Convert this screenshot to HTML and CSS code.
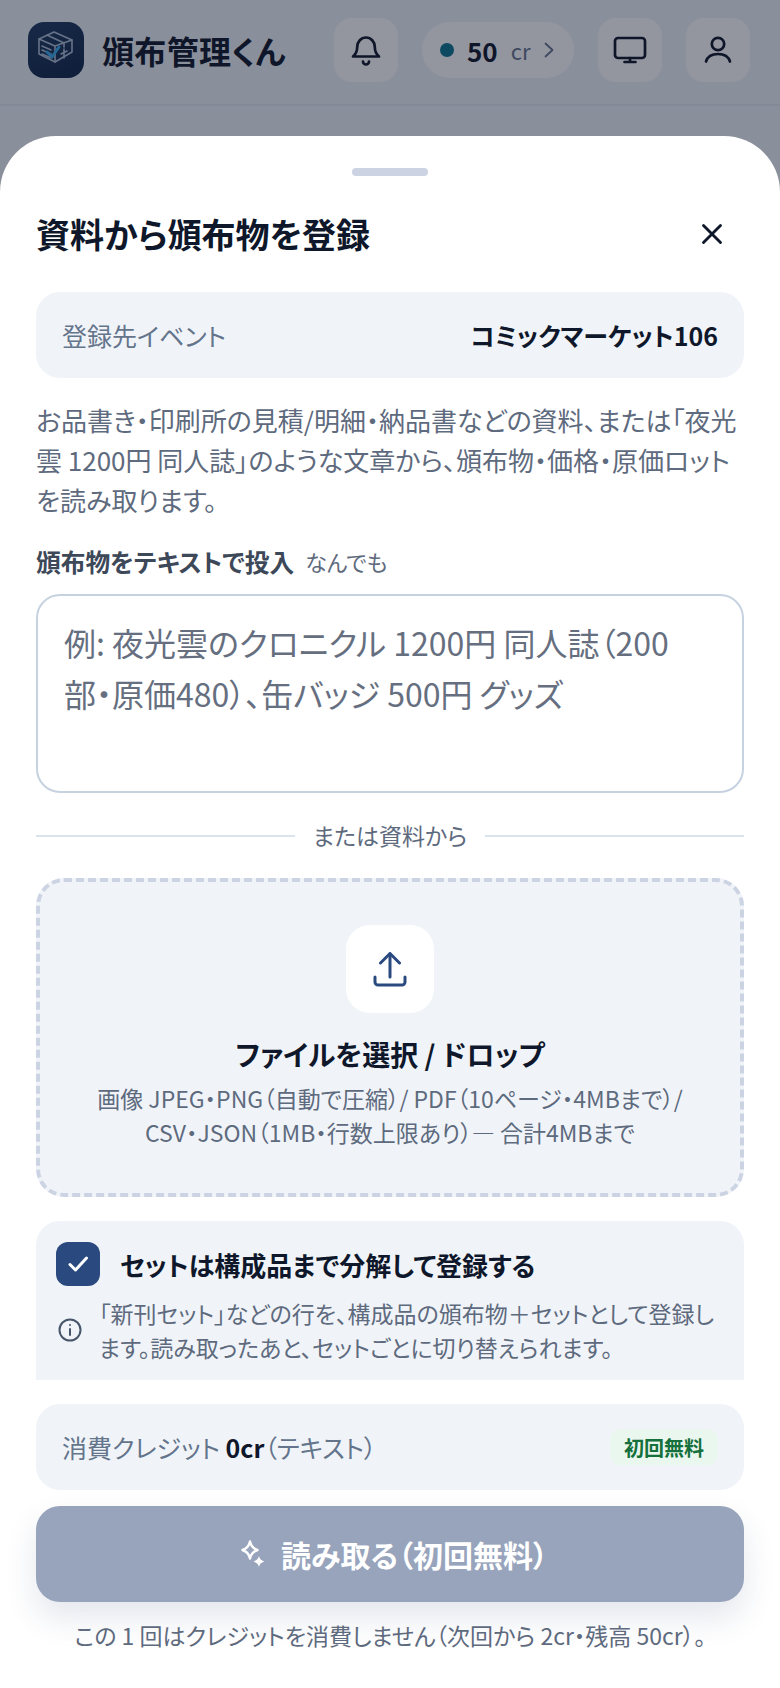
FILE: index.html
```html
<!DOCTYPE html>
<html lang="ja">
<head>
<meta charset="utf-8">
<title>頒布管理くん</title>
<link rel="stylesheet" href="styles.css">
</head>
<body>
<div class="page">
  <header class="topbar">
    <div class="brand">
      <div class="logo">
        <svg viewBox="0 0 56 56" width="56" height="56" fill="none" stroke="#aebfd6" stroke-width="1.6" stroke-linejoin="round" stroke-linecap="round">
          <path d="M11 17 L26 10 L44 18 L44 30 L27 40 L11 32 Z"/>
          <path d="M11 17 L27 24 L44 18 M27 24 V40"/>
          <path d="M14 24 L23 28 M14 28 L23 32 M14 32 L23 36"/>
          <path d="M19 13 L36 21 V25"/>
          <path d="M33 32 L39 29 M36 27 V36"/>
          <path d="M19 30 L24 35 L31 25" stroke="#38a9ec" stroke-width="3"/>
        </svg>
      </div>
      <span class="brand-name">頒布管理くん</span>
    </div>
    <div class="actions">
      <button class="icon-btn">
        <svg viewBox="0 0 36 36" width="36" height="36" class="ico"><path d="M5 24.500c2.800-2.400 4.200-5 4.200-9.500a8.800 9.500 0 0 1 17.600 0c0 4.500 1.400 7.100 4.200 9.500Z"/><path d="M15 29.500a3 3 0 0 0 6 0"/></svg>
      </button>
      <button class="credit">
        <span class="dot"></span><span class="credit-num">50</span><span class="credit-unit">cr</span>
        <svg viewBox="0 0 10 16" width="10" height="16" class="ico thin"><path d="M1.500 1.500 8.500 8l-7 6.500"/></svg>
      </button>
      <button class="icon-btn">
        <svg viewBox="0 0 36 36" width="36" height="36" class="ico"><rect x="3" y="6" width="30" height="20" rx="3"/><path d="M18 26v4M12.500 30h11"/></svg>
      </button>
      <button class="icon-btn">
        <svg viewBox="0 0 36 36" width="36" height="36" class="ico"><circle cx="18" cy="12" r="6.200"/><path d="M6 29.500c1.500-5 6-7.500 12-7.500s10.500 2.500 12 7.500"/></svg>
      </button>
    </div>
  </header>
  <div class="scrim"></div>
  <section class="sheet">
    <div class="handle"></div>
    <div class="sheet-body">
      <div class="title-row">
        <h1 class="title">資料から頒布物を登録</h1>
        <button class="close">
          <svg viewBox="0 0 24 24" width="34" height="34" class="ico dark"><path d="M18 6 6 18M6 6l12 12"/></svg>
        </button>
      </div>
      <div class="event-card">
        <span class="event-label">登録先イベント</span>
        <strong class="event-name">コミックマーケット106</strong>
      </div>
      <p class="lead">お品書き・印刷所の見積/明細・納品書などの資料、または「夜光雲 1200円 同人誌」のような文章から、頒布物・価格・原価ロットを読み取ります。</p>
      <div class="field-label"><strong>頒布物をテキストで投入</strong><span>なんでも</span></div>
      <textarea class="text-input" placeholder="例: 夜光雲のクロニクル 1200円 同人誌（200部・原価480）、缶バッジ 500円 グッズ"></textarea>
      <div class="divider"><span>または資料から</span></div>
      <div class="dropzone">
        <div class="upload-box">
          <svg viewBox="0 0 36 36" width="36" height="36" class="ico navy"><path d="M18 25V2"/><path d="M8.500 11 18 1.500 27.500 11"/><path d="M3 25v5a3 3 0 0 0 3 3h24a3 3 0 0 0 3-3v-5"/></svg>
        </div>
        <div class="drop-title">ファイルを選択 / ドロップ</div>
        <p class="drop-sub">画像 JPEG・PNG（自動で圧縮）/ PDF（10ページ・4MBまで）/<br>CSV・JSON（1MB・行数上限あり）— 合計4MBまで</p>
      </div>
      <div class="split-card">
        <div class="split-row">
          <span class="checkbox">
            <svg viewBox="0 0 24 24" width="24" height="24" class="ico white"><path d="M4 12.500l5.500 5.500L20.500 6"/></svg>
          </span>
          <strong class="split-label">セットは構成品まで分解して登録する</strong>
        </div>
        <div class="split-note">
          <svg viewBox="0 0 24 24" width="24" height="24" class="ico gray"><circle cx="12" cy="12" r="10.500"/><path d="M12 17v-6M12 7h.01"/></svg>
          <p>「新刊セット」などの行を、構成品の頒布物＋セットとして登録します。読み取ったあと、セットごとに切り替えられます。</p>
        </div>
      </div>
    </div>
    <div class="sheet-foot">
      <div class="cost-card">
        <span class="cost-text">消費クレジット <b>0cr</b>（テキスト）</span>
        <span class="badge">初回無料</span>
      </div>
      <button class="submit">
        <svg viewBox="0 0 28 32" width="28" height="32" fill="#fff"><path d="M11 3.500c1 5 3 7 7.500 8.500C14 13.500 12 15.500 11 20.500 10 15.500 8 13.500 3.500 12 8 10.500 10 8.500 11 3.500Z" fill="none" stroke="#fff" stroke-width="2.400" stroke-linejoin="round"/><path d="M20 18c.8 3 2 4.200 5.500 5.500C22 24.800 20.800 26 20 29c-.8-3-2-4.200-5.500-5.500C18 22.200 19.200 21 20 18Z"/></svg>
        <span>読み取る（初回無料）</span>
      </button>
      <p class="foot-note">この 1 回はクレジットを消費しません（次回から 2cr・残高 50cr）。</p>
    </div>
  </section>
</div>
</body>
</html>
```
FILE: styles.css
```css
* { box-sizing: border-box; }
html, body { margin: 0; padding: 0; }
body {
  font-family: "Noto Sans CJK JP", "Noto Sans", sans-serif;
  font-feature-settings: "palt";
  color: #0f172a;
  background: #eff3f9;
}
button { font: inherit; border: 0; padding: 0; color: inherit; background: none; }
.page { position: relative; width: 780px; height: 1688px; overflow: hidden; }

.topbar {
  height: 106px;
  padding: 18px 30px 0 28px;
  display: flex;
  justify-content: space-between;
  align-items: flex-start;
  border-bottom: 2px solid #e2e8f0;
}
.brand { display: flex; align-items: center; gap: 18px; height: 64px; }
.logo {
  width: 56px; height: 56px; border-radius: 16px;
  background: linear-gradient(160deg, #1e3a5f, #0f2547);
}
.logo svg { display: block; }
.brand-name { font-size: 32px; font-weight: 700; letter-spacing: .01em; }
.actions { display: flex; align-items: center; gap: 24px; }
.icon-btn {
  width: 64px; height: 64px; border-radius: 18px;
  background: #fff;
  display: flex; align-items: center; justify-content: center;
}
.credit {
  width: 152px; height: 56px; border-radius: 28px;
  background: #fff;
  display: flex; align-items: center;
  padding-left: 18px;
}
.dot { width: 14px; height: 14px; border-radius: 50%; background: #0e7490; }
.credit-num { font-size: 26px; font-weight: 700; margin-left: 13px; }
.credit-unit { font-size: 22px; color: #64748b; margin-left: 13px; }
.credit .ico { margin-left: 14px; }
.ico { fill: none; stroke: #0f172a; stroke-width: 2.700; stroke-linecap: round; stroke-linejoin: round; display: block; }
.ico.dark { stroke-width: 2; }
.ico.thin { stroke: #64748b; stroke-width: 1.800; }
.ico.navy { stroke: #2a4a7f; stroke-width: 3; }
.ico.white { stroke: #fff; stroke-width: 3; }
.ico.gray { stroke: #475569; stroke-width: 2; flex: none; }

.scrim { position: absolute; inset: 0; background: rgba(15, 23, 42, .45); }

.sheet {
  position: absolute; left: 0; right: 0; top: 136px; bottom: 0;
  background: #fff;
  border-radius: 56px 56px 0 0;
  display: flex; flex-direction: column;
  overflow: hidden;
}
.handle { flex: none; width: 76px; height: 8px; border-radius: 4px; background: #ccd3e3; margin: 32px auto 0; }
.sheet-body { flex: none; height: 1204px; overflow: hidden; padding: 0 36px; }

.title-row { display: flex; justify-content: space-between; align-items: center; height: 52px; margin-top: 32px; }
.title { margin: 0; font-size: 34px; font-weight: 700; line-height: 52px; }
.close { width: 52px; height: 52px; margin-right: 6px; display: flex; align-items: center; justify-content: center; }

.event-card {
  margin-top: 32px; height: 86px; padding: 0 26px;
  display: flex; justify-content: space-between; align-items: center;
  background: #f0f4f9; border-radius: 24px; font-size: 25px;
}
.event-label { color: #64748b; }
.event-name { font-size: 25px; font-weight: 700; }

.lead { margin: 22px 0 0; font-size: 26px; line-height: 40px; color: #5e6a7d; }
.field-label { margin-top: 23px; height: 36px; display: flex; align-items: center; gap: 11px; }
.field-label strong { font-size: 24.700px; color: #3d4859; font-weight: 700; }
.field-label span { font-size: 22px; color: #5e6a7d; }

.text-input {
  display: block; width: 100%; height: 199px; margin-top: 15px; padding: 21px 26px;
  border: 2px solid #c6d2e0; border-radius: 24px; background: #fff;
  font: inherit; font-feature-settings: inherit; font-size: 32px; line-height: 51px; resize: none; outline: 0;
}
.text-input::placeholder { color: #666f80; opacity: 1; }

.divider { margin-top: 27px; height: 32px; display: flex; align-items: center; gap: 18px; font-size: 23px; color: #5e6a7d; }
.divider span { margin-bottom: 3px; }
.divider::before, .divider::after { content: ""; flex: 1; height: 2px; background: #dbe3ec; }

.dropzone {
  margin-top: 26px; height: 319px; padding-top: 43px;
  border: 4px dashed #ccd3e3; border-radius: 28px; background: #f0f4f9;
  display: flex; flex-direction: column; align-items: center; text-align: center;
}
.upload-box { width: 88px; height: 88px; border-radius: 24px; background: #fff; display: flex; align-items: center; justify-content: center; }
.upload-box svg { margin-top: 2px; }
.drop-title { margin-top: 19px; font-size: 28px; line-height: 44px; font-weight: 700; }
.drop-sub { margin: 5px 0 0; font-size: 23px; line-height: 34px; color: #5e6a7d; }

.split-card { margin-top: 24px; height: 190px; background: #f0f4f9; border-radius: 24px; padding: 21px 20px 0; }
.split-row { display: flex; align-items: center; gap: 20px; }
.checkbox { width: 44px; height: 44px; border-radius: 12px; background: #2a4a7f; display: flex; align-items: center; justify-content: center; flex: none; }
.split-label { font-size: 26px; font-weight: 700; }
.split-note { margin-top: 10px; display: flex; align-items: center; gap: 17px; padding-left: 2px; }
.split-note p { margin: 0; font-size: 23px; line-height: 34px; color: #5e6a7d; }

.sheet-foot { flex: 1; padding: 24px 36px 0; position: relative; }
.cost-card {
  height: 86px; padding: 0 26px; border-radius: 24px; background: #f0f4f9;
  display: flex; justify-content: space-between; align-items: center;
}
.cost-text { font-size: 25px; color: #64748b; }
.cost-text b { color: #0f172a; font-weight: 700; }
.badge { height: 36px; padding: 0 14px; border-radius: 10px; background: #eaf7ef; color: #15703c; font-size: 20px; font-weight: 700; display: flex; align-items: center; }
.submit {
  margin-top: 16px; width: 100%; height: 96px; padding-left: 7px; border-radius: 24px;
  background: #97a4bc; color: #fff; font-size: 30px; font-weight: 700;
  display: flex; align-items: center; justify-content: center; gap: 14px;
  box-shadow: 0 16px 32px rgba(30, 58, 110, .12);
}
.foot-note { margin: 17px 0 0; text-align: center; font-size: 23px; line-height: 32px; color: #5e6a7d; }
```
